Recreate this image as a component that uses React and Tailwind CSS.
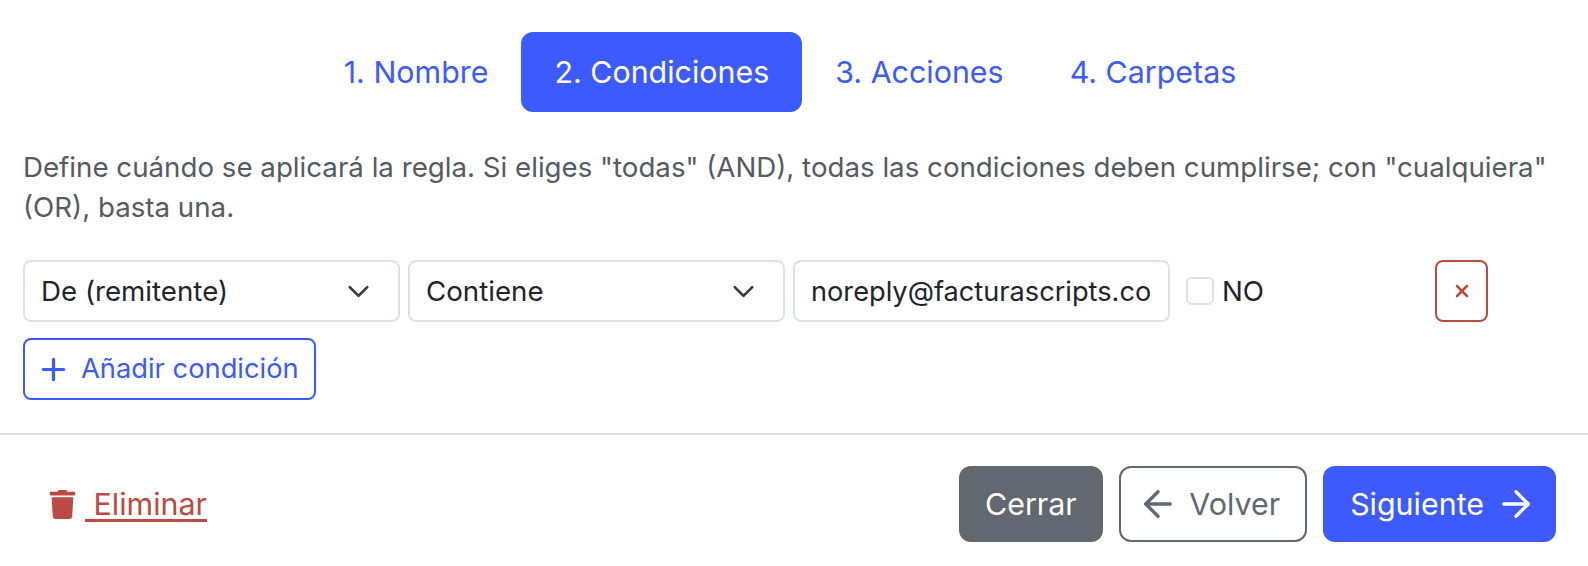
import React from "react";
import { ArrowLeft, ArrowRight, ChevronDown, Plus, X } from "lucide-react";
import { FaTrash } from "react-icons/fa";

const TABS = ["1. Nombre", "2. Condiciones", "3. Acciones", "4. Carpetas"];

function FakeSelect({ label }) {
  return (
    <div className="flex h-[62px] w-[377px] shrink-0 items-center justify-between rounded-lg border-2 border-[#dee2e6] bg-white pl-[16px] pr-[22px] text-[#212529]">
      <span>{label}</span>
      <ChevronDown size={35} strokeWidth={1.8} className="text-[#343a40]" />
    </div>
  );
}

export default function App() {
  return (
    <div className="h-[566px] w-[1588px] overflow-hidden bg-white font-['Inter',sans-serif] text-[27.7px] leading-[40px]">
      <nav className="flex justify-center pr-[8px] pt-8">
        {TABS.map((tab, i) => (
          <a
            key={tab}
            className={`flex h-[80px] items-center rounded-xl px-[33px] text-[30.4px] ${
              i === 1 ? "bg-[#3d5afe] text-white" : "text-[#3d5afe]"
            }`}
          >
            {tab}
          </a>
        ))}
      </nav>

      <div className="px-[23px] pt-[35px]">
        <p className="text-[#555b61]">
          Define cuándo se aplicará la regla. Si eliges "todas" (AND), todas las condiciones deben cumplirse; con "cualquiera" (OR), basta una.
        </p>

        <div className="mt-[33px] flex items-center gap-2">
          <FakeSelect label="De (remitente)" />
          <FakeSelect label="Contiene" />
          <input
            readOnly
            value="noreply@facturascripts.com"
            className="h-[62px] w-[377px] rounded-lg border-2 border-[#dee2e6] pl-[16px] pr-[18px] text-[27.2px] text-[#212529] outline-none"
          />
          <span className="ml-2 h-7 w-7 rounded-md border-2 border-[#dee2e6]" />
          <span className="text-[#212529]">NO</span>
          <button className="ml-[163px] flex h-[62px] w-[53px] items-center justify-center rounded-lg border-2 border-[#bb4a42] text-[#bb4a42]">
            <X size={20} strokeWidth={3} />
          </button>
        </div>

        <button className="mt-4 flex h-[62px] items-center gap-[10px] rounded-lg border-2 border-[#3d5afe] pl-[11px] pr-[15px] text-[27.3px] text-[#3d5afe]">
          <Plus size={35} strokeWidth={2.2} />
          Añadir condición
        </button>
      </div>

      <div className="mt-[33px] flex items-center justify-between border-t-2 border-[#dee2e6] px-8 pt-[31px]">
        <a className="flex items-center pl-4 text-[30.4px] text-[#bb4a42] underline underline-offset-4">
          <FaTrash size={29} />
          <span className="ml-[8px]">&nbsp;Eliminar</span>
        </a>
        <div className="flex items-center gap-4">
          <button className="flex h-[76px] items-center rounded-xl bg-[#62686f] px-[26.5px] text-[30.4px] text-white">Cerrar</button>
          <button className="flex h-[76px] items-center gap-[10px] rounded-xl border-2 border-[#62686f] pl-[16px] pr-[25px] text-[30.4px] text-[#62686f]">
            <ArrowLeft size={42} strokeWidth={1.9} />
            Volver
          </button>
          <button className="flex h-[76px] items-center gap-[11px] rounded-xl bg-[#3d5afe] pl-[27px] pr-[19px] text-[30.4px] text-white">
            Siguiente
            <ArrowRight size={42} strokeWidth={1.9} />
          </button>
        </div>
      </div>
    </div>
  );
}
